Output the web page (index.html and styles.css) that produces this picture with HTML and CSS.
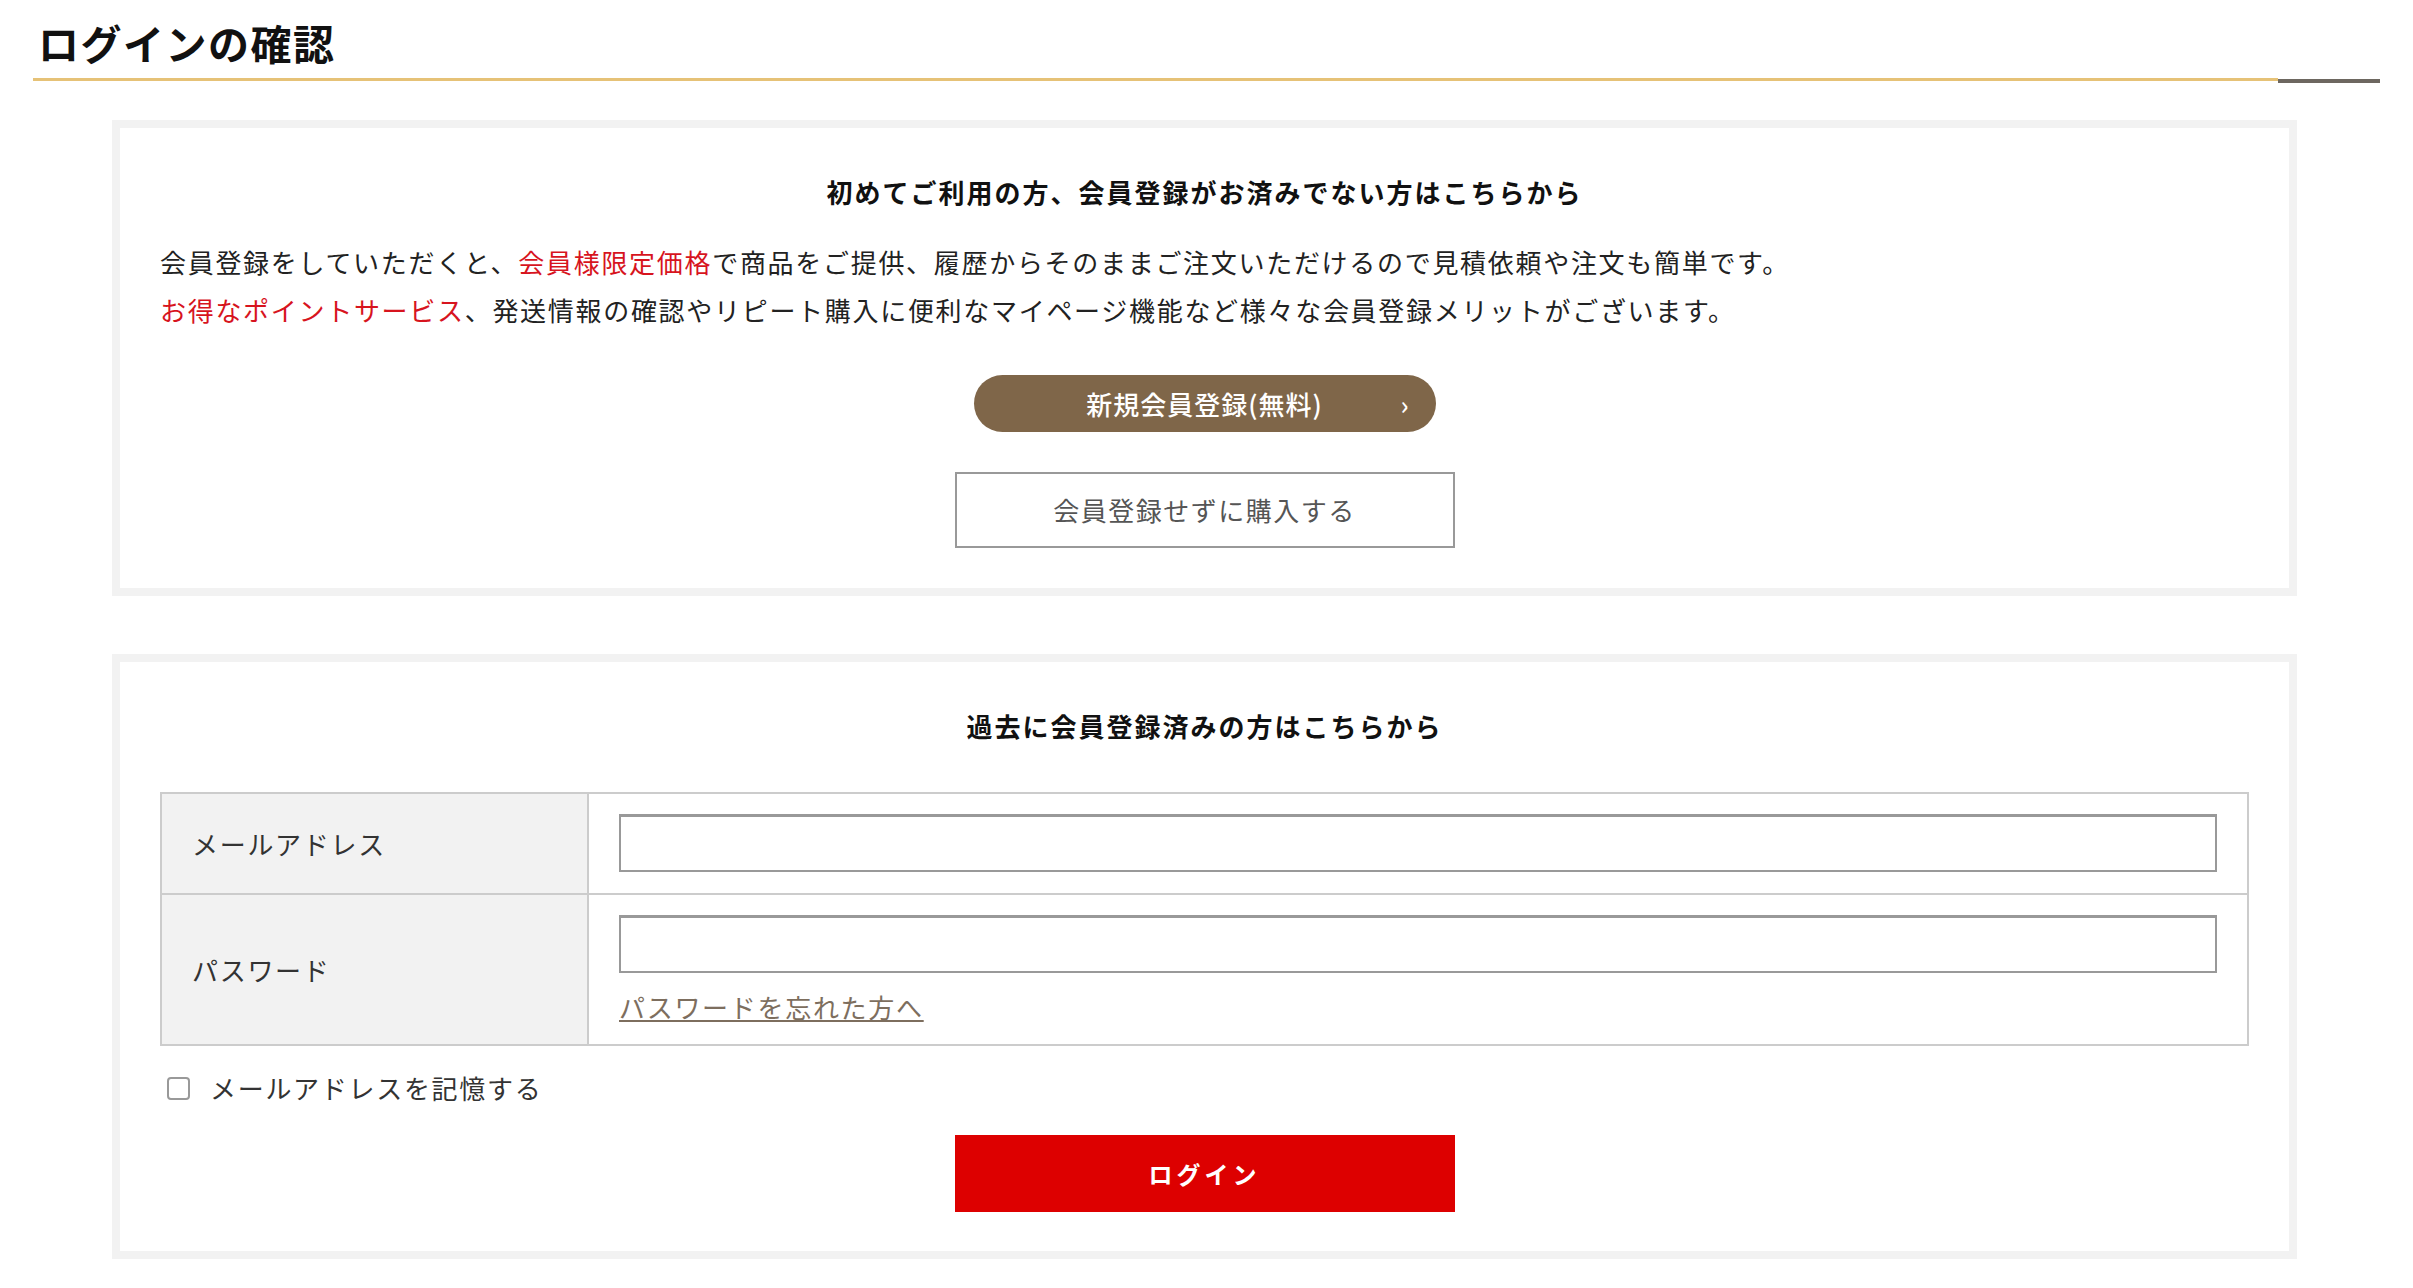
FILE: index.html
```html
<!DOCTYPE html>
<html lang="ja">
    <head>
        <meta charset="UTF-8">
        <title>ログインの確認</title>
        <link rel="stylesheet" href="styles.css">
    </head>

    <body>
        <div class="page">
            <div class="page-head">
                <h1 class="page-title">ログインの確認</h1>
                <div class="rule">
                    <span class="rule-gold"></span>
                    <span class="rule-dark"></span>
                </div>
            </div>

            <div class="cards">
                <section class="card">
                    <h2 class="card-head">初めてご利用の方、会員登録がお済みでない方はこちらから</h2>
                    <p class="lead">
                        会員登録をしていただくと、<span class="red">会員様限定価格</span>で商品をご提供、履歴からそのままご注文いただけるので見積依頼や注文も簡単です。<br>
                        <span class="red">お得なポイントサービス</span>、発送情報の確認やリピート購入に便利なマイページ機能など様々な会員登録メリットがございます。
                    </p>
                    <a class="btn-register" href="#">
                        <span></span>
                        <span class="btn-register-text">新規会員登録(無料)</span>
                        <span class="chevron">&rsaquo;</span>
                    </a>
                    <a class="btn-guest" href="#">会員登録せずに購入する</a>
                </section>

                <section class="card">
                    <h2 class="card-head">過去に会員登録済みの方はこちらから</h2>
                    <table class="login-table">
                        <tr>
                            <th>メールアドレス</th>
                            <td><input class="field" type="text"></td>
                        </tr>
                        <tr>
                            <th>パスワード</th>
                            <td>
                                <input class="field" type="password">
                                <a class="forgot" href="#">パスワードを忘れた方へ</a>
                            </td>
                        </tr>
                    </table>
                    <label class="remember">
                        <input class="remember-box" type="checkbox">
                        <span>メールアドレスを記憶する</span>
                    </label>
                    <button class="btn-login" type="button">ログイン</button>
                </section>
            </div>
        </div>
    </body>
</html>
```

FILE: styles.css
```css
* {
    box-sizing: border-box;
}

body {
    margin: 0;
    font-family: "Noto Sans CJK JP", "Noto Sans", sans-serif;
    color: #222;
    background: #fff;
}

.page {
    padding: 0 33px 0 33px;
}

/* ページ見出し */
.page-title {
    margin: 0;
    padding: 17px 0 0 5px;
    font-size: 41px;
    line-height: 50px;
    letter-spacing: 1.5px;
    font-weight: bold;
    color: #111;
}

.rule {
    display: flex;
    margin-top: 11px;
}

.rule-gold {
    flex: 1;
    height: 3px;
    background: #e6c277;
}

.rule-dark {
    width: 102px;
    height: 4px;
    margin-top: 1px;
    background: #6d6760;
}

.cards {
    padding: 37px 83px 0 79px;
}

.card {
    border: 8px solid #f2f2f2;
    padding: 44px 40px 40px;
}

.card + .card {
    margin-top: 58px;
    padding-bottom: 39px;
}

.card-head {
    margin: 0;
    text-align: center;
    font-size: 26px;
    line-height: 40px;
    letter-spacing: 2px;
    font-weight: bold;
    color: #111;
}

.lead {
    margin: 26px 0 0;
    font-size: 26px;
    line-height: 48px;
    letter-spacing: 1.7px;
    color: #222;
}

.red {
    color: #d7141e;
}

/* ボタン */
.btn-register {
    display: grid;
    grid-template-columns: 1fr auto 1fr;
    align-items: center;
    width: 462px;
    height: 57px;
    margin: 41px auto 0;
    border-radius: 29px;
    background: #7f6649;
    color: #fff;
    text-decoration: none;
    font-size: 26px;
    font-weight: 500;
    letter-spacing: 1px;
}

.chevron {
    justify-self: end;
    padding-right: 26px;
    font-size: 26px;
    line-height: 1;
}

.btn-guest {
    display: block;
    width: 500px;
    height: 76px;
    margin: 40px auto 0;
    border: 2px solid #999;
    background: #fff;
    color: #555;
    text-align: center;
    text-decoration: none;
    font-size: 26px;
    line-height: 72px;
    letter-spacing: 1.5px;
}

/* ログインフォーム */
.login-table {
    width: 100%;
    margin-top: 46px;
    border-collapse: collapse;
    border: 2px solid #ccc;
}

.login-table th {
    width: 427px;
    padding: 0 30px;
    border: 2px solid #ccc;
    background: #f2f2f2;
    text-align: left;
    font-weight: normal;
    font-size: 26px;
    letter-spacing: 1.7px;
    color: #333;
}

.login-table td {
    padding: 20px 30px 21px;
    border: 2px solid #ccc;
}

.field {
    display: block;
    width: 100%;
    height: 58px;
    margin: 0;
    border: 2px solid #999;
    border-top-width: 3px;
    background: #fff;
    font-size: 24px;
}

.forgot {
    display: inline-block;
    margin: 14px 0 -6px;
    color: #7d6e5e;
    font-size: 26px;
    line-height: 40px;
    letter-spacing: 1.7px;
}

.remember {
    display: flex;
    align-items: center;
    gap: 20px;
    margin-top: 18px;
    padding-left: 7px;
    font-size: 26px;
    line-height: 48px;
    letter-spacing: 1.7px;
    color: #333;
}

.remember-box {
    appearance: none;
    width: 23px;
    height: 23px;
    margin: 0;
    border: 2px solid #999;
    border-radius: 4px;
    background: #fff;
}

.btn-login {
    display: block;
    width: 500px;
    height: 77px;
    margin: 23px auto 0;
    border: 0;
    background: #dd0000;
    color: #fff;
    font-family: inherit;
    font-size: 24px;
    font-weight: bold;
    letter-spacing: 4px;
    cursor: pointer;
}
```
